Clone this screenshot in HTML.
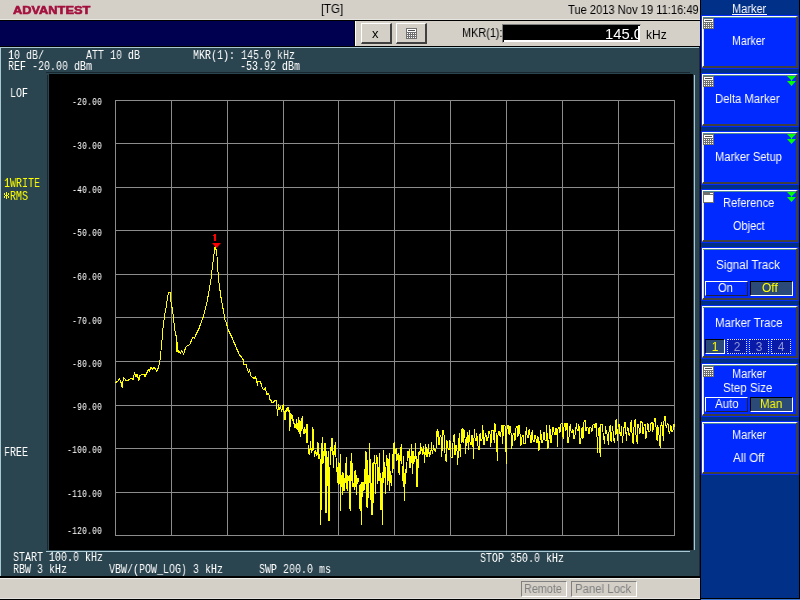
<!DOCTYPE html>
<html><head><meta charset="utf-8">
<style>
*{margin:0;padding:0;box-sizing:border-box}
html,body{width:800px;height:600px;overflow:hidden;background:#d4d0c8;font-family:"Liberation Sans",sans-serif}
.a{position:absolute}
.m{position:absolute;will-change:transform;font-family:"Liberation Mono",monospace;color:#fff;white-space:pre;transform-origin:0 0;line-height:1}
.s{position:absolute;will-change:transform;font-family:"Liberation Sans",sans-serif;white-space:pre;line-height:1}
</style></head><body>
<div class="a" style="left:0px;top:0px;width:700px;height:19px;background:#d4d0c8;"></div>
<div class="s" style="left:13.00px;top:5px;font-size:11px;font-weight:bold;font-style:normal;color:#a3103e;transform:scaleX(1.1642);transform-origin:0 0;-webkit-text-stroke:0.6px #a3103e">ADVANTEST</div>
<div class="s" style="left:321.12px;top:2px;font-size:13px;font-weight:normal;font-style:normal;color:#000;transform:scaleX(0.8750);transform-origin:0 0;">[TG]</div>
<div class="s" style="left:568.00px;top:4px;font-size:12px;font-weight:normal;font-style:normal;color:#000;transform:scaleX(0.9286);transform-origin:0 0;">Tue 2013 Nov 19 11:16:49</div>
<div class="a" style="left:0px;top:19px;width:700px;height:1px;background:#e8e6e0;"></div>
<div class="a" style="left:0px;top:20px;width:700px;height:1px;background:#000;"></div>
<div class="a" style="left:0px;top:21px;width:354px;height:25px;background:#000050;"></div>
<div class="a" style="left:354px;top:21px;width:1px;height:25px;background:#000;"></div>
<div class="a" style="left:355px;top:21px;width:345px;height:25px;background:#d4d0c8;border-left:1px solid #fff"></div>
<div class="a" style="left:361px;top:23px;width:31px;height:21px;background:#d4d0c8;border-top:1px solid #fff;border-left:1px solid #fff;border-right:2px solid #404040;border-bottom:2px solid #404040"></div>
<div class="a" style="left:396px;top:23px;width:31px;height:21px;background:#d4d0c8;border-top:1px solid #fff;border-left:1px solid #fff;border-right:2px solid #404040;border-bottom:2px solid #404040"></div>
<div class="s" style="left:372px;top:27px;font-size:13px;color:#000;letter-spacing:0px;">x</div>
<svg class="a" style="left:406px;top:28px" width="11" height="11" viewBox="0 0 11 11" shape-rendering="crispEdges"><rect x="0" y="0" width="11" height="11" fill="#707070"/><rect x="1" y="1" width="9" height="3" fill="#fff"/><rect x="2" y="2" width="7" height="1" fill="#505050"/><g fill="#fff"><rect x="1" y="5" width="1" height="1"/><rect x="3" y="5" width="1" height="1"/><rect x="5" y="5" width="1" height="1"/><rect x="7" y="5" width="1" height="1"/><rect x="9" y="5" width="1" height="1"/><rect x="1" y="7" width="1" height="1"/><rect x="3" y="7" width="1" height="1"/><rect x="5" y="7" width="1" height="1"/><rect x="7" y="7" width="1" height="1"/><rect x="9" y="7" width="1" height="1"/><rect x="1" y="9" width="1" height="1"/><rect x="3" y="9" width="1" height="1"/><rect x="5" y="9" width="1" height="1"/><rect x="7" y="9" width="1" height="1"/><rect x="9" y="9" width="1" height="1"/></g></svg>
<div class="s" style="left:462.09px;top:27px;font-size:12px;font-weight:normal;font-style:normal;color:#000;transform:scaleX(0.9070);transform-origin:0 0;">MKR(1):</div>
<div class="a" style="left:502px;top:24px;width:139px;height:19px;background:#000;border-top:1px solid #808080;border-left:1px solid #808080;border-right:1px solid #d4d0c8;border-bottom:1px solid #d4d0c8"></div>
<div class="a" style="left:503px;top:25px;width:137px;height:17px;background:#000;border-top:1px solid #000;border-left:1px solid #000"></div>
<div class="a" style="left:504px;top:26px;width:136px;height:16px;background:#000;border-right:2px solid #fff;border-bottom:2px solid #fff"></div>
<div class="a" style="left:504px;top:26px;width:134px;height:14px;overflow:hidden"><div class="s" style="left:100.94px;top:1px;font-size:14px;font-weight:normal;font-style:normal;color:#fff;transform:scaleX(1.0588);transform-origin:0 0;">145.0</div></div>
<div class="s" style="left:646.00px;top:29px;font-size:12px;font-weight:normal;font-style:normal;color:#000;transform:scaleX(1.0000);transform-origin:0 0;">kHz</div>
<div class="a" style="left:0px;top:46px;width:700px;height:1px;background:#000;"></div>
<div class="a" style="left:0px;top:47px;width:700px;height:529px;background:#2b4550;border-top:1px solid #a8c8d4;border-left:1px solid #a8c8d4"></div>
<div class="a" style="left:0px;top:576px;width:700px;height:2px;background:#000;"></div>
<div class="a" style="left:0px;top:578px;width:700px;height:21px;background:#d4d0c8;border-top:1px solid #f0eee8"></div>
<div class="a" style="left:0px;top:598px;width:700px;height:1px;background:#e4e2dc;"></div>
<div class="a" style="left:0px;top:599px;width:700px;height:1px;background:#000;"></div>
<div class="a" style="left:49px;top:74px;width:644px;height:476px;background:#000;"></div>
<div class="a" style="left:46px;top:72px;width:644px;height:1px;background:#182830;"></div>
<div class="a" style="left:47px;top:75px;width:1px;height:475px;background:#182830;"></div>
<div class="a" style="left:694px;top:75px;width:1px;height:475px;background:#a8c8d4;"></div>
<div class="a" style="left:46px;top:551px;width:644px;height:1px;background:#a8c8d4;"></div>
<div class="a" style="left:699px;top:47px;width:1px;height:529px;background:#1c2c34;"></div>
<div class="m" style="left:8px;top:49px;font-size:13px;transform:scaleX(0.769);color:#fff;">10 dB/</div>
<div class="m" style="left:8px;top:60px;font-size:13px;transform:scaleX(0.769);color:#fff;">REF -20.00 dBm</div>
<div class="m" style="left:86px;top:49px;font-size:13px;transform:scaleX(0.769);color:#fff;">ATT 10 dB</div>
<div class="m" style="left:193px;top:49px;font-size:13px;transform:scaleX(0.769);color:#fff;">MKR(1): 145.0 kHz</div>
<div class="m" style="left:240px;top:60px;font-size:13px;transform:scaleX(0.769);color:#fff;">-53.92 dBm</div>
<div class="m" style="left:10px;top:87px;font-size:13px;transform:scaleX(0.769);color:#fff;">LOF</div>
<div class="m" style="left:4px;top:177px;font-size:13px;transform:scaleX(0.769);color:#ff0;">1WRITE</div>
<div class="m" style="left:4px;top:190px;font-size:13px;transform:scaleX(0.769);color:#ff0;"> RMS</div>
<svg class="a" style="left:0;top:0" width="12" height="202" viewBox="0 0 12 202" shape-rendering="crispEdges"><path d="M4,193h1v2h-1zM4,196h1v2h-1zM5,195h1v1h-1zM6,192h1v7h-1zM7,195h1v1h-1zM8,193h1v2h-1zM8,196h1v2h-1z" fill="#ffff00"/></svg>
<div class="m" style="left:4px;top:446px;font-size:13px;transform:scaleX(0.769);color:#fff;">FREE</div>
<div class="m" style="left:13px;top:551px;font-size:13px;transform:scaleX(0.769);color:#fff;">START 100.0 kHz</div>
<div class="m" style="left:13px;top:563px;font-size:13px;transform:scaleX(0.769);color:#fff;">RBW 3 kHz</div>
<div class="m" style="left:109px;top:563px;font-size:13px;transform:scaleX(0.769);color:#fff;">VBW/(POW_LOG) 3 kHz</div>
<div class="m" style="left:259px;top:563px;font-size:13px;transform:scaleX(0.769);color:#fff;">SWP 200.0 ms</div>
<div class="m" style="left:480px;top:552px;font-size:13px;transform:scaleX(0.769);color:#fff;">STOP 350.0 kHz</div>
<div class="m" style="left:72px;top:98px;font-size:10px;transform:scaleX(0.833)">-20.00</div>
<div class="m" style="left:72px;top:142px;font-size:10px;transform:scaleX(0.833)">-30.00</div>
<div class="m" style="left:72px;top:185.5px;font-size:10px;transform:scaleX(0.833)">-40.00</div>
<div class="m" style="left:72px;top:229px;font-size:10px;transform:scaleX(0.833)">-50.00</div>
<div class="m" style="left:72px;top:272.5px;font-size:10px;transform:scaleX(0.833)">-60.00</div>
<div class="m" style="left:72px;top:316.5px;font-size:10px;transform:scaleX(0.833)">-70.00</div>
<div class="m" style="left:72px;top:359.5px;font-size:10px;transform:scaleX(0.833)">-80.00</div>
<div class="m" style="left:72px;top:403px;font-size:10px;transform:scaleX(0.833)">-90.00</div>
<div class="m" style="left:67px;top:446px;font-size:10px;transform:scaleX(0.833)">-100.00</div>
<div class="m" style="left:67px;top:490px;font-size:10px;transform:scaleX(0.833)">-110.00</div>
<div class="m" style="left:67px;top:527px;font-size:10px;transform:scaleX(0.833)">-120.00</div>
<svg class="a" style="left:0;top:0" width="800" height="600" viewBox="0 0 800 600"><g stroke="#8c8c8c" stroke-width="1" shape-rendering="crispEdges"><line x1="115.5" y1="100" x2="115.5" y2="536"/><line x1="171.5" y1="100" x2="171.5" y2="536"/><line x1="227.5" y1="100" x2="227.5" y2="536"/><line x1="283.5" y1="100" x2="283.5" y2="536"/><line x1="338.5" y1="100" x2="338.5" y2="536"/><line x1="394.5" y1="100" x2="394.5" y2="536"/><line x1="450.5" y1="100" x2="450.5" y2="536"/><line x1="506.5" y1="100" x2="506.5" y2="536"/><line x1="562.5" y1="100" x2="562.5" y2="536"/><line x1="618.5" y1="100" x2="618.5" y2="536"/><line x1="674.5" y1="100" x2="674.5" y2="536"/><line x1="115" y1="100.5" x2="675" y2="100.5"/><line x1="115" y1="143.5" x2="675" y2="143.5"/><line x1="115" y1="187.5" x2="675" y2="187.5"/><line x1="115" y1="230.5" x2="675" y2="230.5"/><line x1="115" y1="274.5" x2="675" y2="274.5"/><line x1="115" y1="317.5" x2="675" y2="317.5"/><line x1="115" y1="361.5" x2="675" y2="361.5"/><line x1="115" y1="405.5" x2="675" y2="405.5"/><line x1="115" y1="448.5" x2="675" y2="448.5"/><line x1="115" y1="492.5" x2="675" y2="492.5"/><line x1="115" y1="535.5" x2="675" y2="535.5"/></g><path d="M115,382h1v1h-1zM116,381h1v2h-1zM117,381h1v1h-1zM118,379h1v2h-1zM119,378h1v2h-1zM120,380h1v3h-1zM121,382h1v5h-1zM122,381h1v7h-1zM123,377h1v4h-1zM124,378h1v1h-1zM125,379h1v2h-1zM126,380h1v1h-1zM127,380h1v1h-1zM128,379h1v2h-1zM129,379h1v1h-1zM130,378h1v1h-1zM131,378h1v1h-1zM132,378h1v2h-1zM133,375h1v5h-1zM134,372h1v3h-1zM135,374h1v3h-1zM136,374h1v3h-1zM137,374h1v4h-1zM138,377h1v4h-1zM139,375h1v5h-1zM140,375h1v1h-1zM141,374h1v1h-1zM142,374h1v1h-1zM143,374h1v1h-1zM144,374h1v3h-1zM145,374h1v3h-1zM146,372h1v3h-1zM147,370h1v3h-1zM148,369h1v2h-1zM149,369h1v3h-1zM150,367h1v3h-1zM151,367h1v2h-1zM152,368h1v2h-1zM153,367h1v2h-1zM154,367h1v2h-1zM155,368h1v2h-1zM156,370h1v2h-1zM157,368h1v3h-1zM158,365h1v4h-1zM159,360h1v5h-1zM160,351h1v9h-1zM161,340h1v10h-1zM162,328h1v12h-1zM163,320h1v8h-1zM164,313h1v7h-1zM165,308h1v5h-1zM166,301h1v7h-1zM167,295h1v6h-1zM168,292h1v3h-1zM169,292h1v1h-1zM170,292h1v10h-1zM171,302h1v6h-1zM172,307h1v7h-1zM173,314h1v9h-1zM174,323h1v8h-1zM175,331h1v5h-1zM176,335h1v17h-1zM177,342h1v10h-1zM178,350h1v3h-1zM179,351h1v2h-1zM180,352h1v2h-1zM181,350h1v2h-1zM182,351h1v2h-1zM183,353h1v2h-1zM184,349h1v4h-1zM185,347h1v3h-1zM186,346h1v1h-1zM187,345h1v1h-1zM188,345h1v1h-1zM189,344h1v1h-1zM190,341h1v3h-1zM191,339h1v3h-1zM192,337h1v2h-1zM193,337h1v1h-1zM194,337h1v2h-1zM195,334h1v3h-1zM196,332h1v3h-1zM197,330h1v3h-1zM198,328h1v3h-1zM199,325h1v4h-1zM200,323h1v3h-1zM201,320h1v3h-1zM202,317h1v3h-1zM203,314h1v4h-1zM204,310h1v4h-1zM205,306h1v4h-1zM206,302h1v4h-1zM207,296h1v6h-1zM208,291h1v6h-1zM209,285h1v6h-1zM210,279h1v6h-1zM211,270h1v9h-1zM212,262h1v8h-1zM213,254h1v8h-1zM214,247h1v7h-1zM215,246h1v4h-1zM216,249h1v7h-1zM217,257h1v15h-1zM218,272h1v11h-1zM219,283h1v8h-1zM220,290h1v8h-1zM221,297h1v6h-1zM222,303h1v6h-1zM223,308h1v6h-1zM224,314h1v6h-1zM225,320h1v2h-1zM226,322h1v4h-1zM227,325h1v4h-1zM228,329h1v3h-1zM229,331h1v3h-1zM230,333h1v3h-1zM231,335h1v3h-1zM232,337h1v3h-1zM233,340h1v3h-1zM234,342h1v3h-1zM235,344h1v3h-1zM236,347h1v3h-1zM237,349h1v3h-1zM238,351h1v3h-1zM239,354h1v2h-1zM240,355h1v2h-1zM241,356h1v2h-1zM242,358h1v2h-1zM243,359h1v6h-1zM244,364h1v1h-1zM245,364h1v1h-1zM246,364h1v4h-1zM247,368h1v3h-1zM248,371h1v2h-1zM249,369h1v3h-1zM250,372h1v4h-1zM251,376h1v1h-1zM252,377h1v1h-1zM253,377h1v2h-1zM254,377h1v2h-1zM255,376h1v3h-1zM256,378h1v5h-1zM257,381h1v5h-1zM258,381h1v1h-1zM259,381h1v1h-1zM260,381h1v3h-1zM261,383h1v4h-1zM262,387h1v2h-1zM263,389h1v1h-1zM264,388h1v2h-1zM265,387h1v4h-1zM266,391h1v4h-1zM267,393h1v2h-1zM268,393h1v2h-1zM269,395h1v5h-1zM270,399h1v2h-1zM271,400h1v3h-1zM272,402h1v1h-1zM273,401h1v2h-1zM274,400h1v2h-1zM275,400h1v1h-1zM276,400h1v9h-1zM277,409h1v7h-1zM278,404h1v6h-1zM279,407h1v3h-1zM280,406h1v3h-1zM281,409h1v3h-1zM282,405h1v5h-1zM283,404h1v8h-1zM284,411h1v9h-1zM285,410h1v10h-1zM286,408h1v4h-1zM287,407h1v4h-1zM288,407h1v5h-1zM289,410h1v21h-1zM290,413h1v14h-1zM291,414h1v5h-1zM292,415h1v6h-1zM293,419h1v5h-1zM294,423h1v5h-1zM295,424h1v4h-1zM296,419h1v10h-1zM297,423h1v7h-1zM298,417h1v15h-1zM299,420h1v14h-1zM300,421h1v16h-1zM301,418h1v13h-1zM302,416h1v13h-1zM303,429h1v5h-1zM304,427h1v7h-1zM305,429h1v4h-1zM306,424h1v19h-1zM307,424h1v19h-1zM308,445h1v9h-1zM309,449h1v6h-1zM310,441h1v9h-1zM311,448h1v5h-1zM312,427h1v24h-1zM313,429h1v21h-1zM314,451h1v6h-1zM315,450h1v4h-1zM316,452h1v4h-1zM317,442h1v13h-1zM318,443h1v16h-1zM319,454h1v5h-1zM320,459h1v66h-1zM321,443h1v67h-1zM322,437h1v27h-1zM323,451h1v12h-1zM324,443h1v13h-1zM325,443h1v70h-1zM326,451h1v62h-1zM327,457h1v29h-1zM328,451h1v70h-1zM329,467h1v54h-1zM330,447h1v18h-1zM331,438h1v13h-1zM332,438h1v17h-1zM333,451h1v17h-1zM334,445h1v10h-1zM335,442h1v15h-1zM336,458h1v14h-1zM337,467h1v16h-1zM338,462h1v23h-1zM339,463h1v21h-1zM340,454h1v57h-1zM341,475h1v12h-1zM342,472h1v23h-1zM343,473h1v18h-1zM344,478h1v13h-1zM345,463h1v20h-1zM346,457h1v32h-1zM347,475h1v16h-1zM348,476h1v5h-1zM349,475h1v34h-1zM350,461h1v50h-1zM351,453h1v28h-1zM352,463h1v24h-1zM353,483h1v4h-1zM354,471h1v19h-1zM355,470h1v17h-1zM356,475h1v20h-1zM357,478h1v6h-1zM358,478h1v4h-1zM359,485h1v24h-1zM360,484h1v27h-1zM361,482h1v43h-1zM362,482h1v15h-1zM363,482h1v9h-1zM364,469h1v21h-1zM365,451h1v33h-1zM366,452h1v55h-1zM367,460h1v48h-1zM368,475h1v23h-1zM369,443h1v40h-1zM370,459h1v41h-1zM371,483h1v32h-1zM372,463h1v52h-1zM373,462h1v41h-1zM374,455h1v9h-1zM375,463h1v31h-1zM376,455h1v9h-1zM377,457h1v27h-1zM378,467h1v14h-1zM379,453h1v28h-1zM380,473h1v37h-1zM381,478h1v32h-1zM382,472h1v53h-1zM383,450h1v33h-1zM384,462h1v16h-1zM385,467h1v27h-1zM386,455h1v11h-1zM387,458h1v27h-1zM388,459h1v22h-1zM389,453h1v38h-1zM390,471h1v12h-1zM391,475h1v11h-1zM392,454h1v19h-1zM393,443h1v26h-1zM394,442h1v12h-1zM395,449h1v5h-1zM396,448h1v13h-1zM397,454h1v6h-1zM398,453h1v20h-1zM399,455h1v20h-1zM400,447h1v14h-1zM401,444h1v20h-1zM402,466h1v15h-1zM403,456h1v31h-1zM404,473h1v28h-1zM405,469h1v15h-1zM406,462h1v11h-1zM407,451h1v10h-1zM408,451h1v7h-1zM409,449h1v19h-1zM410,456h1v12h-1zM411,444h1v19h-1zM412,451h1v23h-1zM413,451h1v13h-1zM414,456h1v6h-1zM415,443h1v16h-1zM416,456h1v31h-1zM417,459h1v28h-1zM418,452h1v16h-1zM419,451h1v4h-1zM420,443h1v11h-1zM421,447h1v4h-1zM422,449h1v6h-1zM423,446h1v8h-1zM424,452h1v11h-1zM425,444h1v11h-1zM426,447h1v10h-1zM427,449h1v8h-1zM428,444h1v10h-1zM429,452h1v5h-1zM430,450h1v5h-1zM431,442h1v9h-1zM432,450h1v4h-1zM433,445h1v5h-1zM434,448h1v3h-1zM435,449h1v3h-1zM436,431h1v17h-1zM437,429h1v8h-1zM438,431h1v14h-1zM439,437h1v8h-1zM440,435h1v2h-1zM441,437h1v20h-1zM442,430h1v21h-1zM443,430h1v5h-1zM444,435h1v18h-1zM445,454h1v7h-1zM446,440h1v22h-1zM447,441h1v7h-1zM448,448h1v2h-1zM449,440h1v10h-1zM450,441h1v16h-1zM451,457h1v1h-1zM452,443h1v15h-1zM453,435h1v7h-1zM454,434h1v21h-1zM455,445h1v10h-1zM456,445h1v6h-1zM457,451h1v14h-1zM458,438h1v20h-1zM459,433h1v18h-1zM460,444h1v13h-1zM461,429h1v14h-1zM462,428h1v14h-1zM463,429h1v14h-1zM464,430h1v8h-1zM465,439h1v15h-1zM466,437h1v9h-1zM467,432h1v11h-1zM468,435h1v15h-1zM469,430h1v12h-1zM470,442h1v3h-1zM471,435h1v10h-1zM472,435h1v12h-1zM473,438h1v21h-1zM474,429h1v9h-1zM475,438h1v3h-1zM476,433h1v8h-1zM477,436h1v10h-1zM478,446h1v4h-1zM479,434h1v16h-1zM480,433h1v8h-1zM481,439h1v2h-1zM482,425h1v14h-1zM483,430h1v15h-1zM484,437h1v8h-1zM485,433h1v4h-1zM486,435h1v6h-1zM487,437h1v4h-1zM488,431h1v7h-1zM489,431h1v3h-1zM490,434h1v13h-1zM491,430h1v13h-1zM492,430h1v1h-1zM493,430h1v10h-1zM494,423h1v20h-1zM495,424h1v8h-1zM496,433h1v19h-1zM497,435h1v26h-1zM498,431h1v4h-1zM499,431h1v5h-1zM500,432h1v5h-1zM501,425h1v7h-1zM502,425h1v19h-1zM503,425h1v11h-1zM504,425h1v1h-1zM505,426h1v26h-1zM506,429h1v35h-1zM507,425h1v4h-1zM508,425h1v9h-1zM509,426h1v9h-1zM510,426h1v7h-1zM511,433h1v16h-1zM512,435h1v11h-1zM513,433h1v2h-1zM514,433h1v8h-1zM515,428h1v12h-1zM516,426h1v2h-1zM517,426h1v11h-1zM518,425h1v11h-1zM519,425h1v9h-1zM520,434h1v12h-1zM521,437h1v8h-1zM522,435h1v2h-1zM523,435h1v9h-1zM524,443h1v1h-1zM525,431h1v13h-1zM526,427h1v8h-1zM527,435h1v3h-1zM528,430h1v8h-1zM529,429h1v6h-1zM530,435h1v8h-1zM531,432h1v11h-1zM532,430h1v10h-1zM533,440h1v2h-1zM534,435h1v7h-1zM535,435h1v4h-1zM536,439h1v4h-1zM537,436h1v7h-1zM538,437h1v14h-1zM539,441h1v9h-1zM540,430h1v10h-1zM541,434h1v9h-1zM542,440h1v3h-1zM543,432h1v8h-1zM544,432h1v8h-1zM545,440h1v1h-1zM546,425h1v16h-1zM547,433h1v16h-1zM548,440h1v8h-1zM549,425h1v14h-1zM550,429h1v14h-1zM551,435h1v8h-1zM552,427h1v8h-1zM553,427h1v5h-1zM554,432h1v3h-1zM555,428h1v7h-1zM556,428h1v7h-1zM557,429h1v18h-1zM558,427h1v2h-1zM559,427h1v6h-1zM560,424h1v8h-1zM561,423h1v1h-1zM562,423h1v14h-1zM563,427h1v12h-1zM564,423h1v4h-1zM565,423h1v8h-1zM566,423h1v7h-1zM567,423h1v20h-1zM568,437h1v6h-1zM569,426h1v11h-1zM570,424h1v7h-1zM571,431h1v2h-1zM572,429h1v4h-1zM573,430h1v9h-1zM574,435h1v4h-1zM575,427h1v8h-1zM576,423h1v6h-1zM577,429h1v2h-1zM578,424h1v7h-1zM579,426h1v18h-1zM580,438h1v6h-1zM581,428h1v10h-1zM582,427h1v12h-1zM583,422h1v16h-1zM584,420h1v2h-1zM585,420h1v11h-1zM586,427h1v4h-1zM587,427h1v1h-1zM588,428h1v6h-1zM589,427h1v7h-1zM590,427h1v1h-1zM591,428h1v4h-1zM592,425h1v6h-1zM593,424h1v1h-1zM594,424h1v4h-1zM595,423h1v5h-1zM596,423h1v14h-1zM597,437h1v16h-1zM598,428h1v8h-1zM599,427h1v26h-1zM600,424h1v33h-1zM601,424h1v1h-1zM602,424h1v8h-1zM603,433h1v7h-1zM604,436h1v8h-1zM605,426h1v8h-1zM606,430h1v4h-1zM607,434h1v7h-1zM608,432h1v13h-1zM609,426h1v6h-1zM610,425h1v16h-1zM611,432h1v10h-1zM612,426h1v5h-1zM613,431h1v10h-1zM614,438h1v5h-1zM615,420h1v15h-1zM616,419h1v15h-1zM617,429h1v12h-1zM618,424h1v3h-1zM619,424h1v10h-1zM620,432h1v4h-1zM621,426h1v10h-1zM622,436h1v7h-1zM623,427h1v9h-1zM624,422h1v6h-1zM625,422h1v12h-1zM626,432h1v9h-1zM627,427h1v4h-1zM628,428h1v7h-1zM629,433h1v3h-1zM630,422h1v10h-1zM631,420h1v13h-1zM632,433h1v10h-1zM633,427h1v17h-1zM634,420h1v7h-1zM635,419h1v16h-1zM636,435h1v7h-1zM637,424h1v20h-1zM638,424h1v4h-1zM639,428h1v6h-1zM640,421h1v12h-1zM641,421h1v2h-1zM642,422h1v12h-1zM643,427h1v7h-1zM644,424h1v2h-1zM645,424h1v15h-1zM646,431h1v7h-1zM647,423h1v7h-1zM648,424h1v8h-1zM649,431h1v1h-1zM650,423h1v8h-1zM651,422h1v2h-1zM652,422h1v10h-1zM653,423h1v7h-1zM654,418h1v4h-1zM655,418h1v9h-1zM656,427h1v13h-1zM657,425h1v16h-1zM658,427h1v8h-1zM659,435h1v11h-1zM660,425h1v23h-1zM661,422h1v4h-1zM662,425h1v11h-1zM663,421h1v20h-1zM664,416h1v5h-1zM665,416h1v10h-1zM666,425h1v3h-1zM667,423h1v2h-1zM668,424h1v8h-1zM669,431h1v3h-1zM670,425h1v6h-1zM671,426h1v6h-1zM672,430h1v2h-1zM673,424h1v6h-1zM674,424h1v3h-1z" fill="#ffff00" shape-rendering="crispEdges"/><path d="M212,243 L221,243 L216.5,248 Z" fill="#ff0000"/><path d="M214,234h2v7h-2v-5h-1v-1h1z" fill="#ff0000" shape-rendering="crispEdges"/></svg>
<div class="a" style="left:521px;top:581px;width:46px;height:16px;background:transparent;border-top:1px solid #808080;border-left:1px solid #808080;border-right:1px solid #fff;border-bottom:1px solid #fff"></div>
<div class="s" style="left:524.10px;top:583px;font-size:12px;font-weight:normal;font-style:normal;color:#808080;transform:scaleX(0.9024);transform-origin:0 0;">Remote</div>
<div class="a" style="left:571px;top:581px;width:66px;height:16px;background:transparent;border-top:1px solid #808080;border-left:1px solid #808080;border-right:1px solid #fff;border-bottom:1px solid #fff"></div>
<div class="s" style="left:575.05px;top:583px;font-size:12px;font-weight:normal;font-style:normal;color:#808080;transform:scaleX(0.9483);transform-origin:0 0;">Panel Lock</div>
<div class="a" style="left:700px;top:0px;width:1px;height:600px;background:#000;"></div>
<div class="a" style="left:701px;top:0px;width:98px;height:600px;background:#003087;"></div>
<div class="a" style="left:799px;top:0px;width:1px;height:600px;background:#000;"></div>
<div class="a" style="left:701px;top:598px;width:99px;height:1px;background:#000;"></div>
<div class="a" style="left:701px;top:599px;width:99px;height:1px;background:#3c78d0;"></div>
<div class="s" style="left:732.08px;top:3px;font-size:12px;font-weight:normal;font-style:normal;color:#fff;transform:scaleX(0.9167);transform-origin:0 0;">Marker</div>
<div class="a" style="left:732px;top:14px;width:35px;height:1px;background:#fff;"></div>
<div class="a" style="left:701px;top:15px;width:98px;height:54px;background:#002aff;"></div>
<div class="a" style="left:702px;top:16px;width:96px;height:52px;background:#002aff;border-top:1px solid #fff;border-left:1px solid #fff;border-right:2px solid #404040;border-bottom:2px solid #404040"></div>
<div class="a" style="left:703px;top:17px;width:93px;height:1px;background:#4f8a9a;"></div>
<div class="a" style="left:703px;top:18px;width:1px;height:48px;background:#d8e0d0;"></div>
<svg class="a" style="left:703px;top:18px" width="11" height="11" viewBox="0 0 11 11" shape-rendering="crispEdges"><rect x="0" y="0" width="11" height="11" fill="#707070"/><rect x="1" y="1" width="9" height="3" fill="#fff"/><rect x="2" y="2" width="7" height="1" fill="#505050"/><g fill="#fff"><rect x="1" y="5" width="1" height="1"/><rect x="3" y="5" width="1" height="1"/><rect x="5" y="5" width="1" height="1"/><rect x="7" y="5" width="1" height="1"/><rect x="9" y="5" width="1" height="1"/><rect x="1" y="7" width="1" height="1"/><rect x="3" y="7" width="1" height="1"/><rect x="5" y="7" width="1" height="1"/><rect x="7" y="7" width="1" height="1"/><rect x="9" y="7" width="1" height="1"/><rect x="1" y="9" width="1" height="1"/><rect x="3" y="9" width="1" height="1"/><rect x="5" y="9" width="1" height="1"/><rect x="7" y="9" width="1" height="1"/><rect x="9" y="9" width="1" height="1"/></g></svg>
<div class="a" style="left:701px;top:73px;width:98px;height:54px;background:#002aff;"></div>
<div class="a" style="left:702px;top:74px;width:96px;height:52px;background:#002aff;border-top:1px solid #fff;border-left:1px solid #fff;border-right:2px solid #404040;border-bottom:2px solid #404040"></div>
<div class="a" style="left:703px;top:75px;width:93px;height:1px;background:#4f8a9a;"></div>
<div class="a" style="left:703px;top:76px;width:1px;height:48px;background:#d8e0d0;"></div>
<svg class="a" style="left:703px;top:76px" width="11" height="11" viewBox="0 0 11 11" shape-rendering="crispEdges"><rect x="0" y="0" width="11" height="11" fill="#707070"/><rect x="1" y="1" width="9" height="3" fill="#fff"/><rect x="2" y="2" width="7" height="1" fill="#505050"/><g fill="#fff"><rect x="1" y="5" width="1" height="1"/><rect x="3" y="5" width="1" height="1"/><rect x="5" y="5" width="1" height="1"/><rect x="7" y="5" width="1" height="1"/><rect x="9" y="5" width="1" height="1"/><rect x="1" y="7" width="1" height="1"/><rect x="3" y="7" width="1" height="1"/><rect x="5" y="7" width="1" height="1"/><rect x="7" y="7" width="1" height="1"/><rect x="9" y="7" width="1" height="1"/><rect x="1" y="9" width="1" height="1"/><rect x="3" y="9" width="1" height="1"/><rect x="5" y="9" width="1" height="1"/><rect x="7" y="9" width="1" height="1"/><rect x="9" y="9" width="1" height="1"/></g></svg>
<svg class="a" style="left:787px;top:76px" width="9" height="11" viewBox="0 0 9 11"><path d="M0,0 L9,0 L4.5,4.6 Z M4,4.4 h1 v1 h-1 z M0,5 L9,5 L4.5,10 Z" fill="#00ff00"/></svg>
<div class="a" style="left:701px;top:131px;width:98px;height:54px;background:#002aff;"></div>
<div class="a" style="left:702px;top:132px;width:96px;height:52px;background:#002aff;border-top:1px solid #fff;border-left:1px solid #fff;border-right:2px solid #404040;border-bottom:2px solid #404040"></div>
<div class="a" style="left:703px;top:133px;width:93px;height:1px;background:#4f8a9a;"></div>
<div class="a" style="left:703px;top:134px;width:1px;height:48px;background:#d8e0d0;"></div>
<svg class="a" style="left:703px;top:134px" width="11" height="11" viewBox="0 0 11 11" shape-rendering="crispEdges"><rect x="0" y="0" width="11" height="11" fill="#707070"/><rect x="1" y="1" width="9" height="3" fill="#fff"/><rect x="2" y="2" width="7" height="1" fill="#505050"/><g fill="#fff"><rect x="1" y="5" width="1" height="1"/><rect x="3" y="5" width="1" height="1"/><rect x="5" y="5" width="1" height="1"/><rect x="7" y="5" width="1" height="1"/><rect x="9" y="5" width="1" height="1"/><rect x="1" y="7" width="1" height="1"/><rect x="3" y="7" width="1" height="1"/><rect x="5" y="7" width="1" height="1"/><rect x="7" y="7" width="1" height="1"/><rect x="9" y="7" width="1" height="1"/><rect x="1" y="9" width="1" height="1"/><rect x="3" y="9" width="1" height="1"/><rect x="5" y="9" width="1" height="1"/><rect x="7" y="9" width="1" height="1"/><rect x="9" y="9" width="1" height="1"/></g></svg>
<svg class="a" style="left:787px;top:134px" width="9" height="11" viewBox="0 0 9 11"><path d="M0,0 L9,0 L4.5,4.6 Z M4,4.4 h1 v1 h-1 z M0,5 L9,5 L4.5,10 Z" fill="#00ff00"/></svg>
<div class="a" style="left:701px;top:189px;width:98px;height:54px;background:#002aff;"></div>
<div class="a" style="left:702px;top:190px;width:96px;height:52px;background:#002aff;border-top:1px solid #fff;border-left:1px solid #fff;border-right:2px solid #404040;border-bottom:2px solid #404040"></div>
<div class="a" style="left:703px;top:191px;width:93px;height:1px;background:#4f8a9a;"></div>
<div class="a" style="left:703px;top:192px;width:1px;height:48px;background:#d8e0d0;"></div>
<svg class="a" style="left:703px;top:192px" width="11" height="11" viewBox="0 0 11 11" shape-rendering="crispEdges"><rect x="0" y="0" width="11" height="11" fill="#707070"/><rect x="1" y="3" width="9" height="7" fill="#fff"/><rect x="7" y="1" width="3" height="1" fill="#fff"/></svg>
<svg class="a" style="left:787px;top:192px" width="9" height="11" viewBox="0 0 9 11"><path d="M0,0 L9,0 L4.5,4.6 Z M4,4.4 h1 v1 h-1 z M0,5 L9,5 L4.5,10 Z" fill="#00ff00"/></svg>
<div class="a" style="left:701px;top:247px;width:98px;height:54px;background:#002aff;"></div>
<div class="a" style="left:702px;top:248px;width:96px;height:52px;background:#002aff;border-top:1px solid #fff;border-left:1px solid #fff;border-right:2px solid #404040;border-bottom:2px solid #404040"></div>
<div class="a" style="left:703px;top:249px;width:93px;height:1px;background:#4f8a9a;"></div>
<div class="a" style="left:703px;top:250px;width:1px;height:48px;background:#d8e0d0;"></div>
<div class="a" style="left:705px;top:281px;width:43px;height:15px;background:#002aff;border-top:1px solid #fff;border-left:1px solid #fff;border-right:1px solid #202040;border-bottom:1px solid #202040"></div>
<div class="a" style="left:750px;top:281px;width:43px;height:15px;background:#2b4a78;border-top:1px solid #000;border-left:1px solid #000;border-right:1px solid #fff;border-bottom:1px solid #fff"></div>
<div class="a" style="left:701px;top:305px;width:98px;height:54px;background:#002aff;"></div>
<div class="a" style="left:702px;top:306px;width:96px;height:52px;background:#002aff;border-top:1px solid #fff;border-left:1px solid #fff;border-right:2px solid #404040;border-bottom:2px solid #404040"></div>
<div class="a" style="left:703px;top:307px;width:93px;height:1px;background:#4f8a9a;"></div>
<div class="a" style="left:703px;top:308px;width:1px;height:48px;background:#d8e0d0;"></div>
<div class="a" style="left:705px;top:339px;width:20px;height:15px;background:#2b4a78;border-top:1px solid #000;border-left:1px solid #000;border-right:1px solid #fff;border-bottom:1px solid #fff"></div>
<div class="s" style="left:705px;top:341px;width:20px;text-align:center;font-size:12px;color:#ffff00">1</div>
<div class="a" style="left:727px;top:339px;width:20px;height:15px;background:#0a1aa8;border:1px dotted #e0e0ff"></div>
<div class="s" style="left:727px;top:341px;width:20px;text-align:center;font-size:12px;color:#9098d8">2</div>
<div class="a" style="left:749px;top:339px;width:20px;height:15px;background:#0a1aa8;border:1px dotted #e0e0ff"></div>
<div class="s" style="left:749px;top:341px;width:20px;text-align:center;font-size:12px;color:#9098d8">3</div>
<div class="a" style="left:771px;top:339px;width:20px;height:15px;background:#0a1aa8;border:1px dotted #e0e0ff"></div>
<div class="s" style="left:771px;top:341px;width:20px;text-align:center;font-size:12px;color:#9098d8">4</div>
<div class="a" style="left:701px;top:363px;width:98px;height:54px;background:#002aff;"></div>
<div class="a" style="left:702px;top:364px;width:96px;height:52px;background:#002aff;border-top:1px solid #fff;border-left:1px solid #fff;border-right:2px solid #404040;border-bottom:2px solid #404040"></div>
<div class="a" style="left:703px;top:365px;width:93px;height:1px;background:#4f8a9a;"></div>
<div class="a" style="left:703px;top:366px;width:1px;height:48px;background:#d8e0d0;"></div>
<svg class="a" style="left:703px;top:366px" width="11" height="11" viewBox="0 0 11 11" shape-rendering="crispEdges"><rect x="0" y="0" width="11" height="11" fill="#707070"/><rect x="1" y="1" width="9" height="3" fill="#fff"/><rect x="2" y="2" width="7" height="1" fill="#505050"/><g fill="#fff"><rect x="1" y="5" width="1" height="1"/><rect x="3" y="5" width="1" height="1"/><rect x="5" y="5" width="1" height="1"/><rect x="7" y="5" width="1" height="1"/><rect x="9" y="5" width="1" height="1"/><rect x="1" y="7" width="1" height="1"/><rect x="3" y="7" width="1" height="1"/><rect x="5" y="7" width="1" height="1"/><rect x="7" y="7" width="1" height="1"/><rect x="9" y="7" width="1" height="1"/><rect x="1" y="9" width="1" height="1"/><rect x="3" y="9" width="1" height="1"/><rect x="5" y="9" width="1" height="1"/><rect x="7" y="9" width="1" height="1"/><rect x="9" y="9" width="1" height="1"/></g></svg>
<div class="a" style="left:705px;top:397px;width:43px;height:15px;background:#002aff;border-top:1px solid #fff;border-left:1px solid #fff;border-right:1px solid #202040;border-bottom:1px solid #202040"></div>
<div class="a" style="left:750px;top:397px;width:43px;height:15px;background:#2b4a78;border-top:1px solid #000;border-left:1px solid #000;border-right:1px solid #fff;border-bottom:1px solid #fff"></div>
<div class="a" style="left:701px;top:421px;width:98px;height:54px;background:#002aff;"></div>
<div class="a" style="left:702px;top:422px;width:96px;height:52px;background:#002aff;border-top:1px solid #fff;border-left:1px solid #fff;border-right:2px solid #404040;border-bottom:2px solid #404040"></div>
<div class="a" style="left:703px;top:423px;width:93px;height:1px;background:#4f8a9a;"></div>
<div class="a" style="left:703px;top:424px;width:1px;height:48px;background:#d8e0d0;"></div>
<div class="s" style="left:732.11px;top:35px;font-size:12px;font-weight:normal;font-style:normal;color:#fff;transform:scaleX(0.8889);transform-origin:0 0;">Marker</div>
<div class="s" style="left:715.06px;top:93px;font-size:12px;font-weight:normal;font-style:normal;color:#fff;transform:scaleX(0.9412);transform-origin:0 0;">Delta Marker</div>
<div class="s" style="left:715.07px;top:151px;font-size:12px;font-weight:normal;font-style:normal;color:#fff;transform:scaleX(0.9296);transform-origin:0 0;">Marker Setup</div>
<div class="s" style="left:723.07px;top:197px;font-size:12px;font-weight:normal;font-style:normal;color:#fff;transform:scaleX(0.9259);transform-origin:0 0;">Reference</div>
<div class="s" style="left:733.00px;top:220px;font-size:12px;font-weight:normal;font-style:normal;color:#fff;transform:scaleX(0.9143);transform-origin:0 0;">Object</div>
<div class="s" style="left:716.03px;top:259px;font-size:12px;font-weight:normal;font-style:normal;color:#fff;transform:scaleX(0.9692);transform-origin:0 0;">Signal Track</div>
<div class="s" style="left:715.04px;top:317px;font-size:12px;font-weight:normal;font-style:normal;color:#fff;transform:scaleX(0.9565);transform-origin:0 0;">Marker Trace</div>
<div class="s" style="left:732.08px;top:368px;font-size:12px;font-weight:normal;font-style:normal;color:#fff;transform:scaleX(0.9167);transform-origin:0 0;">Marker</div>
<div class="s" style="left:723.04px;top:382px;font-size:12px;font-weight:normal;font-style:normal;color:#fff;transform:scaleX(0.9600);transform-origin:0 0;">Step Size</div>
<div class="s" style="left:732.08px;top:429px;font-size:12px;font-weight:normal;font-style:normal;color:#fff;transform:scaleX(0.9167);transform-origin:0 0;">Marker</div>
<div class="s" style="left:733.00px;top:452px;font-size:12px;font-weight:normal;font-style:normal;color:#fff;transform:scaleX(0.9697);transform-origin:0 0;">All Off</div>
<div class="s" style="left:718.00px;top:282px;font-size:12px;font-weight:normal;font-style:normal;color:#fff;transform:scaleX(0.9333);transform-origin:0 0;">On</div>
<div class="s" style="left:762.00px;top:282px;font-size:12px;font-weight:normal;font-style:normal;color:#ffff00;transform:scaleX(1.0000);transform-origin:0 0;">Off</div>
<div class="s" style="left:715.00px;top:398px;font-size:12px;font-weight:normal;font-style:normal;color:#fff;transform:scaleX(0.9583);transform-origin:0 0;">Auto</div>
<div class="s" style="left:760.05px;top:398px;font-size:12px;font-weight:normal;font-style:normal;color:#ffff00;transform:scaleX(0.9545);transform-origin:0 0;">Man</div>
</body></html>
